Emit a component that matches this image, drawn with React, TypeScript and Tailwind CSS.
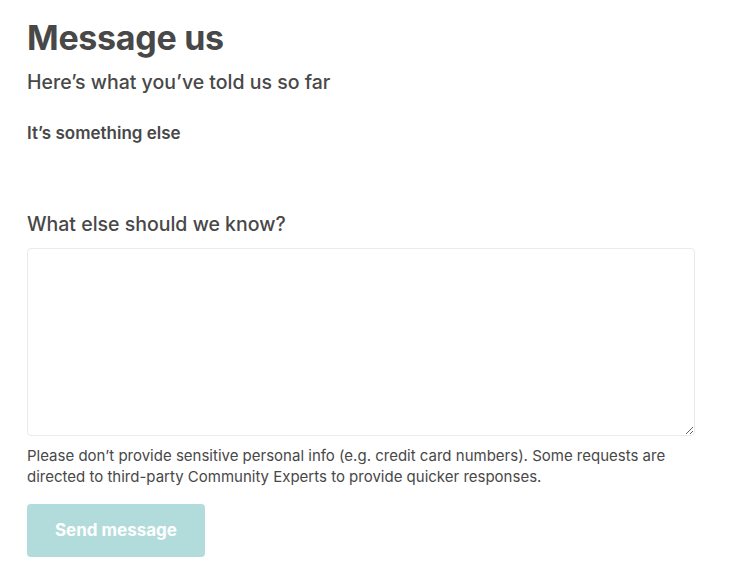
export default function App() {
  return (
    <div className="min-h-[572px] w-[730px] bg-white pl-[27px] pr-[35px] pt-[16px] text-[#484848] font-['Inter','Open_Sans',sans-serif]">
      <h1 className="text-[34px] font-bold leading-[44px] tracking-[-0.3px]">Message us</h1>
      <h2 className="mt-[10px] text-[19.5px] font-medium leading-[24px]">
        Here’s what you’ve told us so far
      </h2>
      <p className="mt-[28px] text-[17px] font-semibold leading-[22px]">It’s something else</p>

      <label className="mt-[68px] block text-[19.5px] font-medium leading-[24px]">What else should we know?</label>
      <textarea className="mt-[12px] block h-[188px] w-[668px] rounded-[4px] border border-[#ebebeb] p-3 text-[16px] outline-none" />
      <p className="mt-[9px] w-[668px] text-[15px] leading-[21px]">
        Please don’t provide sensitive personal info (e.g. credit card numbers). Some requests are
        directed to third-party Community Experts to provide quicker responses.
      </p>
      <button className="mt-[17px] flex h-[53px] w-[178px] items-center justify-center rounded-[4px] bg-[#b2dcdb] text-[17px] font-bold text-white">
        Send message
      </button>
    </div>
  );
}
